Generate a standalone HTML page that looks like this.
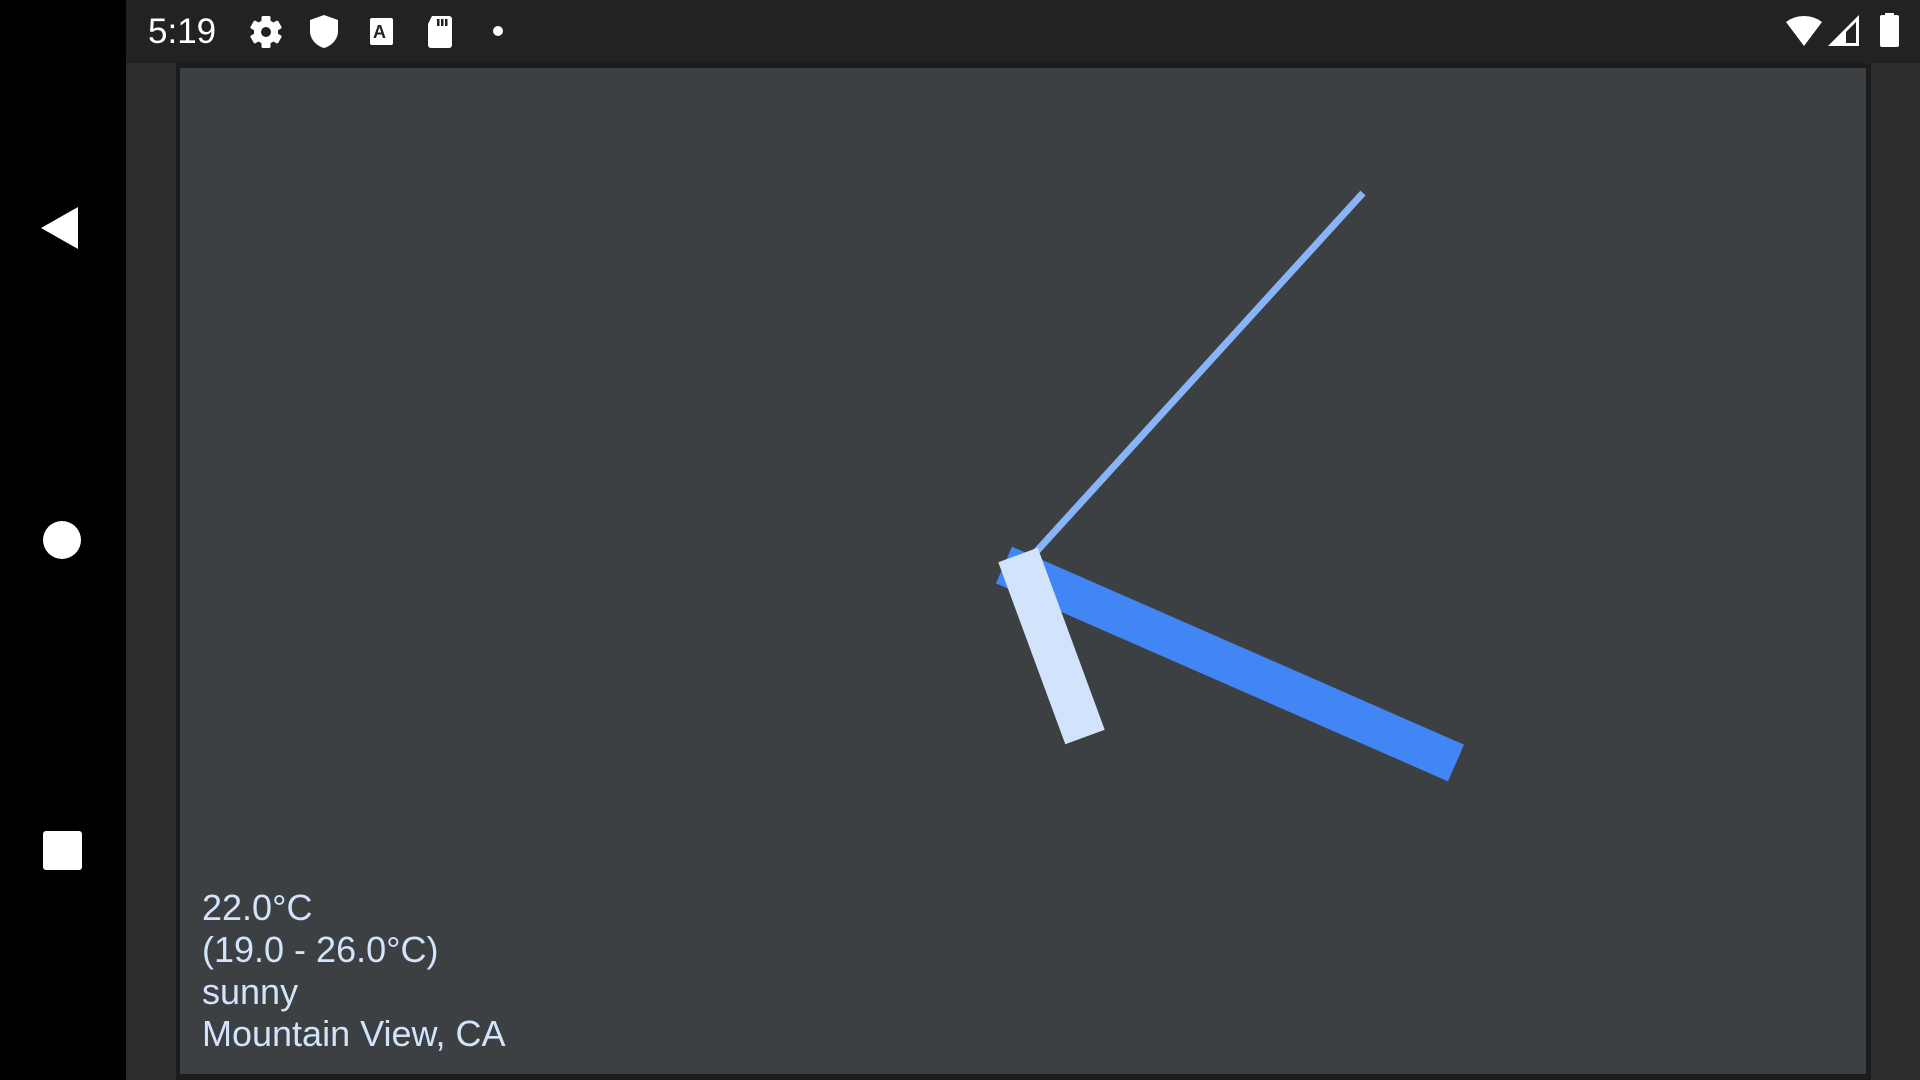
<!DOCTYPE html>
<html><head><meta charset="utf-8"><style>
html,body{margin:0;padding:0;width:1920px;height:1080px;overflow:hidden;background:#2d2d2d;font-family:"Liberation Sans",sans-serif}
#nav{position:absolute;left:0;top:0;width:126px;height:1080px;background:#000}
#status{position:absolute;left:126px;top:0;width:1794px;height:63px;background:#222}
#border{position:absolute;left:176px;top:63px;width:1695px;height:1017px;background:#1c1c1c}
#panel{position:absolute;left:180px;top:68px;width:1686px;height:1006px;background:#3c4043}
#txt{position:absolute;left:202px;top:887px;color:#d2e3fc;font-size:36px;line-height:42px}
#time{position:absolute;left:148px;top:12px;color:#fff;font-size:35px}
</style></head><body>
<div id="nav"></div>
<div id="status"></div>
<div id="border"></div>
<div id="panel"></div>
<div id="time">5:19</div>
<svg width="1920" height="1080" style="position:absolute;left:0;top:0">
<polygon points="41,228 78,207 78,249" fill="#fff"/>
<circle cx="62" cy="540" r="19" fill="#fff"/>
<rect x="43" y="831" width="39" height="39" rx="3" fill="#fff"/>
<g fill="#fff">
<circle cx="266" cy="32" r="12"/>
<g transform="translate(266,32)">
<rect x="-4.5" y="-16" width="9" height="32" rx="1.5"/>
<rect x="-4.5" y="-16" width="9" height="32" rx="1.5" transform="rotate(60)"/>
<rect x="-4.5" y="-16" width="9" height="32" rx="1.5" transform="rotate(120)"/>
</g>
<circle cx="266" cy="32" r="5" fill="#222"/>
<path d="M324 15 L338 20 V31 C338 40 331 46 324 48 C317 46 310 40 310 31 V20 Z"/>
<rect x="370" y="18" width="23" height="27" rx="2"/>
<text x="373" y="38" font-size="18" font-weight="bold" fill="#222" font-family="Liberation Sans">A</text>
<path d="M432 16 H449 A3 3 0 0 1 452 19 V45 A3 3 0 0 1 449 48 H431 A3 3 0 0 1 428 45 V24 Z"/>
<rect x="437" y="19" width="2.5" height="7" fill="#222"/><rect x="441" y="19" width="2.5" height="7" fill="#222"/><rect x="445" y="19" width="2.5" height="7" fill="#222"/>
<circle cx="498" cy="31" r="5"/>
<path d="M1786 22 A30 30 0 0 1 1822 22 L1804 46 Z"/>
<path d="M1828 46 L1859 15 V46 Z"/>
<path d="M1846 43 V32 L1856 22 V43 Z" fill="#222"/>
<rect x="1880" y="15" width="19" height="32" rx="2"/>
<rect x="1885" y="13" width="9" height="4"/>
</g>
<line x1="1004" y1="565" x2="1456" y2="763" stroke="#4285f4" stroke-width="40"/>
<line x1="1035" y1="553" x2="1363" y2="193" stroke="#8ab4f8" stroke-width="7"/>
<line x1="1018" y1="555" x2="1085" y2="737" stroke="#d2e3fc" stroke-width="42"/>
</svg>
<div id="txt">22.0°C<br>(19.0 - 26.0°C)<br>sunny<br>Mountain View, CA</div>
</body></html>
